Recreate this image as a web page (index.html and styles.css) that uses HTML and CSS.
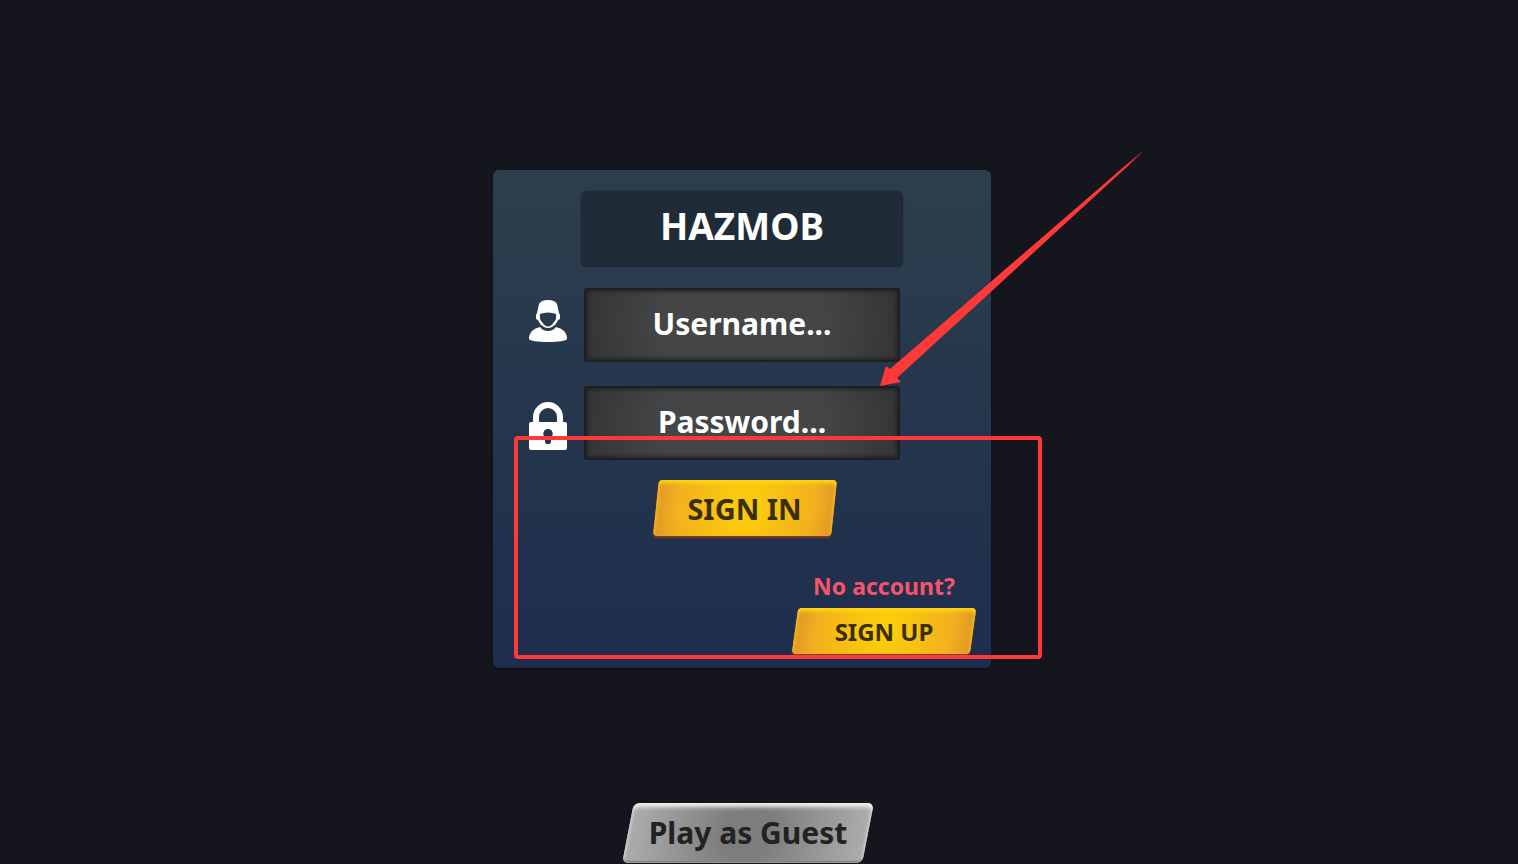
FILE: index.html
```
<!DOCTYPE html>
<html lang="en">
<head>
    <meta charset="UTF-8">
    <meta name="viewport" content="width=device-width, initial-scale=1.0">
    <title>Hazmob</title>
    <link rel="stylesheet" href="styles.css">
</head>
<body>
    <main>
        <form class="panel">
            <h1>HAZMOB</h1>

            <div class="field">
                <label for="username" aria-label="Username">
                    <svg width="38" height="42" viewBox="0 0 38 42" fill="#fff">
                        <path fill-rule="evenodd" d="M10 4Q12 0 19 0Q26 0 28 4L30 13L31 15V19L29 20Q27 25 23 27Q19 29 15 27Q11 25 9 20L7 19V15L8 13ZM11 14Q10 19 13 22Q19 31 25 22Q28 19 27 14Q19 11 11 14Z"/>
                        <path d="M11 27Q14 31 19 31Q24 31 27 27Q32 28 35 31Q38 34 38 39Q36 42 19 42Q2 42 0 39Q0 34 3 31Q6 28 11 27Z"/>
                    </svg>
                </label>
                <input type="text" id="username" placeholder="Username...">
            </div>

            <div class="field">
                <label class="lock" for="password" aria-label="Password">
                    <svg width="38" height="48" viewBox="0 0 38 48">
                        <path d="M7 22V15A12 12 0 0 1 31 15V22" fill="none" stroke="#fff" stroke-width="6"/>
                        <path fill="#fff" fill-rule="evenodd" d="M2 20H36Q38 20 38 22V46Q38 48 36 48H2Q0 48 0 46V22Q0 20 2 20ZM19 27A4.500 4.500 0 0 0 16 35V40Q16 42 18 42H20Q22 42 22 40V35A4.500 4.500 0 0 0 19 27Z"/>
                    </svg>
                </label>
                <input type="password" id="password" placeholder="Password...">
            </div>

            <button type="submit" class="btn sign-in">SIGN IN</button>

            <div class="register">
                <p>No account?</p>
                <button type="button" class="btn sign-up">SIGN UP</button>
            </div>

            <!-- red marks over the form -->
            <div class="mark-box"></div>
            <svg class="mark-arrow" width="262" height="234" viewBox="0 0 262 234">
                <defs>
                    <linearGradient id="fade" x1="1" y1="0" x2="0" y2="1">
                        <stop offset="0" stop-color="#ff3838" stop-opacity="0.3"/>
                        <stop offset="0.06" stop-color="#ff3838"/>
                    </linearGradient>
                </defs>
                <path fill="url(#fade)" d="M0 234L6 214L10 217L261 0L262 1L17 226L21 230Z"/>
            </svg>
        </form>
    </main>

    <footer>
        <button type="button" class="btn guest">Play as Guest</button>
    </footer>
</body>
</html>
```
FILE: styles.css
```
* {
    box-sizing: border-box;
}
body {
    margin: 0;
    min-height: 100vh;
    display: flex;
    flex-direction: column;
    background-color: #15151e;
    font-family: "Noto Sans", "Open Sans", sans-serif;
    font-weight: bold;
}
main {
    flex: 1;
    display: flex;
    justify-content: center;
    align-items: center;
    padding: 35px 34px 0 0;
}
.panel {
    position: relative;
    width: 498px;
    padding: 21px 15px 14px;
    display: flex;
    flex-direction: column;
    align-items: center;
    border-radius: 6px;
    background: linear-gradient(#2d3e4d, #293a4d 30%, #26374d 40%, #23344d 60%, #1e2d4d);
    box-shadow: 0 1px 2px #0c0c12;
}
h1 {
    width: 322px;
    height: 76px;
    margin: 0 0 21px;
    border-radius: 6px;
    background-color: #202b38;
    box-shadow: inset 0 -1px 1px #1a2532, 0 0 2px #202b38;
    color: #fff;
    font-size: 37px;
    line-height: 70px;
    text-align: center;
}
.field {
    width: 100%;
    margin-bottom: 24px;
    display: grid;
    grid-template-columns: 1fr 316px 1fr;
    align-items: center;
}
.field label {
    justify-self: end;
    margin-right: 17px;
    padding-bottom: 8px;
}
.field label.lock {
    padding: 6px 0 0;
}
.field svg {
    display: block;
}
.field input {
    width: 100%;
    height: 74px;
    padding: 0 0 4px;
    border: 2px solid #1e1f21;
    border-radius: 3px;
    background: radial-gradient(circle at center, #444547 50%, #343537);
    box-shadow: inset 0 0 4px 1px #1e1f21;
    color: #fff;
    font: inherit;
    font-size: 30px;
    text-align: center;
}
.field input::placeholder {
    color: #fff;
    opacity: 1;
}
.btn {
    position: relative;
    z-index: 0;
    padding: 0;
    border: 0;
    background: none;
    color: #3a2e05;
    font: inherit;
    cursor: pointer;
}
/* slanted plate behind the label */
.btn::before {
    content: "";
    position: absolute;
    inset: 0 3px;
    z-index: -1;
    border-radius: 4px;
    background: radial-gradient(circle at center, #fbcb0c 15%, #f2b01e 75%, #de942a);
    box-shadow: inset 0 3px 4px #ffd910, inset 0 0 2px #f6b52a, 0 2px 2px #863b26;
    transform: skewX(-6deg);
}
.sign-in {
    width: 184px;
    height: 56px;
    margin: -4px 0 0 5px;
    font-size: 29px;
}
.register {
    align-self: flex-end;
    width: 184px;
    margin-top: 32px;
    text-align: center;
}
.register p {
    margin: 0 0 4px;
    color: #f6546a;
    font-size: 23px;
    line-height: 36px;
}
.sign-up {
    display: block;
    width: 184px;
    height: 46px;
    font-size: 24px;
}
.sign-up::before {
    transform: skewX(-8deg);
}
footer {
    padding: 0 22px 1px 0;
    text-align: center;
}
.guest {
    display: block;
    width: 250px;
    height: 60px;
    margin: 0 auto;
    padding-bottom: 2px;
    color: #222;
    font-size: 30px;
}
.guest::before {
    inset: 0 5px;
    border-radius: 6px;
    background: radial-gradient(circle at center, #7d7d7d 20%, #a9a9a9 90%);
    box-shadow: inset 0 4px 4px #f0f0f0, inset 0 0 3px #c8c8c8, inset 0 -2px 1px #777;
    transform: skewX(-11deg);
}
.mark-box {
    position: absolute;
    top: 266px;
    left: 21px;
    width: 528px;
    height: 223px;
    border: 4px solid #ff3838;
    border-radius: 4px;
    pointer-events: none;
}
.mark-arrow {
    position: absolute;
    top: -18px;
    left: 387px;
    pointer-events: none;
}
```
